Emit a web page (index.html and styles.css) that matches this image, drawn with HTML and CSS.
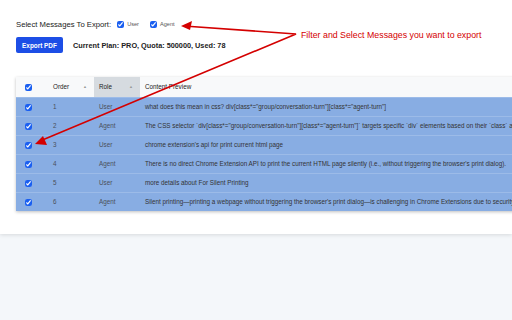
FILE: index.html
```html
<!DOCTYPE html>
<html lang="en">
<head>
    <meta charset="UTF-8">
    <meta name="viewport" content="width=device-width, initial-scale=1.0">
    <title>Export Messages</title>
    <link rel="stylesheet" href="styles.css">
</head>
<body>
    <div class="panel">
        <div class="filter-row">
            <span class="filter-title">Select Messages To Export:</span>
            <label class="filter-option"><input type="checkbox" checked> User</label>
            <label class="filter-option"><input type="checkbox" checked> Agent</label>
        </div>
        <div class="action-row">
            <button class="export-btn">Export PDF</button>
            <span class="plan-info">Current Plan: PRO, Quota: 500000, Used: 78</span>
        </div>
        <div class="table-wrap">
            <table class="msg-table">
                <thead>
                    <tr>
                        <th class="col-check"><input type="checkbox" checked></th>
                        <th class="col-order"><div class="th-sort">Order <span class="sort">&#9650;</span></div></th>
                        <th class="col-role sorted"><div class="th-sort">Role <span class="sort">&#9650;</span></div></th>
                        <th class="col-content">Content Preview</th>
                    </tr>
                </thead>
                <tbody>
                    <tr>
                        <td class="col-check"><input type="checkbox" checked></td>
                        <td class="col-order">1</td>
                        <td class="col-role">User</td>
                        <td class="col-content">what does this mean in css? div[class*="group/conversation-turn"][class*="agent-turn"]</td>
                    </tr>
                    <tr>
                        <td class="col-check"><input type="checkbox" checked></td>
                        <td class="col-order">2</td>
                        <td class="col-role">Agent</td>
                        <td class="col-content">The CSS selector `div[class*="group/conversation-turn"][class*="agent-turn"]` targets specific `div` elements based on their `class` attribute.</td>
                    </tr>
                    <tr>
                        <td class="col-check"><input type="checkbox" checked></td>
                        <td class="col-order">3</td>
                        <td class="col-role">User</td>
                        <td class="col-content">chrome extension's api for print current html page</td>
                    </tr>
                    <tr>
                        <td class="col-check"><input type="checkbox" checked></td>
                        <td class="col-order">4</td>
                        <td class="col-role">Agent</td>
                        <td class="col-content">There is no direct Chrome Extension API to print the current HTML page silently (i.e., without triggering the browser's print dialog).</td>
                    </tr>
                    <tr>
                        <td class="col-check"><input type="checkbox" checked></td>
                        <td class="col-order">5</td>
                        <td class="col-role">User</td>
                        <td class="col-content">more details about For Silent Printing</td>
                    </tr>
                    <tr>
                        <td class="col-check"><input type="checkbox" checked></td>
                        <td class="col-order">6</td>
                        <td class="col-role">Agent</td>
                        <td class="col-content">Silent printing—printing a webpage without triggering the browser's print dialog—is challenging in Chrome Extensions due to security restrictions.</td>
                    </tr>
                </tbody>
            </table>
        </div>
    </div>

    <div class="annotation">Filter and Select Messages you want to export</div>
    <svg class="arrows" width="512" height="320" viewBox="0 0 512 320">
        <polyline points="184,26 296,34 40,141" fill="none" stroke="#d40000" stroke-width="1.6"/>
        <polygon points="181,26 192,21 190,30" fill="#d40000"/>
        <polygon points="35,144 43,136 47,145" fill="#d40000"/>
    </svg>
</body>
</html>
```

FILE: styles.css
```css
html, body {
    margin: 0;
    height: 100%;
    overflow: hidden;
}
body {
    background-color: #f4f7fa;
    font-family: "Liberation Sans", Arial, sans-serif;
    color: #222;
}
.panel {
    background-color: #fff;
    height: 234px;
    box-sizing: border-box;
    padding: 18px 0 0 16px;
    box-shadow: 0 1px 4px rgba(0, 0, 0, 0.12);
    overflow: hidden;
}
.filter-row {
    display: flex;
    align-items: center;
    height: 12px;
}
.filter-title {
    font-size: 7.7px;
    color: #222;
    margin-right: 6px;
}
.filter-option {
    display: flex;
    align-items: center;
    font-size: 5.6px;
    color: #555;
    margin-right: 11px;
}
input[type="checkbox"] {
    width: 7px;
    height: 7px;
    margin: 0 3px 0 0;
    accent-color: #1a5ff0;
}
.action-row {
    display: flex;
    align-items: center;
    margin-top: 7px;
}
.export-btn {
    width: 47px;
    height: 16px;
    padding: 0;
    border: none;
    border-radius: 2px;
    background-color: #1d4ee6;
    color: #fff;
    font-family: inherit;
    font-size: 6.4px;
    font-weight: bold;
}
.plan-info {
    font-size: 7.3px;
    font-weight: bold;
    margin-left: 10px;
    color: #222;
}
.table-wrap {
    margin-top: 24px;
    width: 720px;
    box-shadow: 0 1px 3px rgba(0, 0, 0, 0.25);
}
.msg-table {
    width: 100%;
    border-collapse: collapse;
    font-size: 6.3px;
    table-layout: fixed;
}
.msg-table th,
.msg-table td {
    padding: 0 1px 0 0;
    line-height: 1;
}
.msg-table th {
    height: 20px;
    background-color: #f8f9fa;
    text-align: left;
    font-weight: normal;
    color: #222;
}
.msg-table th.sorted {
    background-color: #d6dbe0;
}
.msg-table td {
    height: 18px;
    background-color: #88ade3;
    color: #4a4f5a;
    border-top: 1px solid #9cbbe8;
    white-space: nowrap;
    overflow: hidden;
}
.msg-table td.col-content {
    color: #333;
}
.msg-table .col-check {
    width: 29px;
    padding: 0;
    text-align: center;
}
.col-check input {
    margin: 0 0 0 -5px;
    vertical-align: middle;
}
.msg-table .col-order {
    width: 40px;
    padding-left: 8px;
}
.msg-table .col-role {
    width: 40px;
    padding-left: 5px;
}
.msg-table .col-content {
    padding-left: 5px;
}
.th-sort {
    display: flex;
    justify-content: space-between;
    align-items: center;
    padding-right: 6px;
}
.sort {
    font-size: 4px;
    color: #999;
}
.annotation {
    position: absolute;
    left: 301px;
    top: 30px;
    font-size: 8.8px;
    color: #d40000;
}
.arrows {
    position: absolute;
    left: 0;
    top: 0;
    pointer-events: none;
}
```
